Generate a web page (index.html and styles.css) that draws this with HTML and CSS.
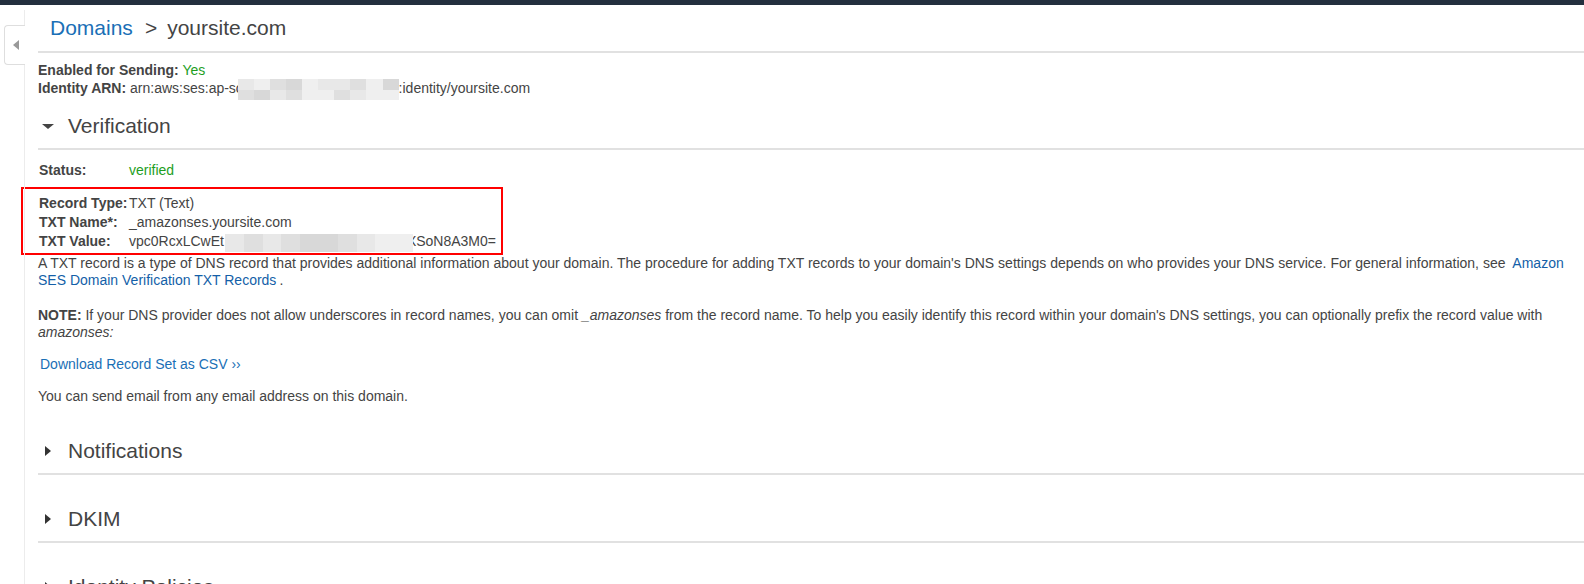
FILE: index.html
```html
<!DOCTYPE html>
<html lang="en">
<head>
<meta charset="utf-8">
<title>yoursite.com</title>
<link rel="stylesheet" href="styles.css">
</head>
<body>
<div class="topbar"></div>
<div class="layout">
  <aside class="sidebar">
    <div class="collapse-tab"><span class="arrow-left"></span></div>
  </aside>
  <main class="main">
    <div class="breadcrumb"><a class="crumb-link" href="#">Domains</a><span class="sep">&gt;</span><span class="crumb-current">yoursite.com</span></div>

    <div class="meta">
      <div><b>Enabled for Sending:</b> <span class="green">Yes</span></div>
      <div><b>Identity ARN:</b> arn:aws:ses:ap-so<span class="mosaic arn"><i class="s2"></i><i class="s4"></i><i class="s3"></i><i class="s1"></i><i class="s4"></i><i class="s2"></i><i class="s2"></i><i class="s3"></i><i class="s4"></i><i class="s1"></i><i class="s3"></i><i class="s1"></i><i class="s2"></i><i class="s3"></i><i class="s4"></i><i class="s4"></i><i class="s3"></i><i class="s2"></i><i class="s4"></i><i class="s4"></i></span>:identity/yoursite.com</div>
    </div>

    <section class="section">
      <div class="sec-head"><span class="icon-box"><span class="tri-down"></span></span><span class="sec-title">Verification</span></div>
      <div class="body">
        <div class="kv status-row">
          <span class="k">Status:</span><span class="v green">verified</span>
        </div>
        <div class="highlight">
          <div class="kv"><span class="k">Record Type:</span><span class="v">TXT (Text)</span></div>
          <div class="kv"><span class="k">TXT Name*:</span><span class="v">_amazonses.yoursite.com</span></div>
          <div class="kv"><span class="k">TXT Value:</span><span class="v">vpc0RcxLCwEt<span class="mosaic txt"><i class="s2"></i><i class="s3"></i><i class="s2"></i><i class="s3"></i><i class="s1"></i><i class="s1"></i><i class="s3"></i><i class="s2"></i><i class="s4"></i><i class="s4"></i></span>XSoN8A3M0=</span></div>
        </div>
        <p class="desc">A TXT record is a type of DNS record that provides additional information about your domain. The procedure for adding TXT records to your domain's DNS settings depends on who provides your DNS service. For general information, see <a class="inline-link" href="#">Amazon SES Domain Verification TXT Records</a>.</p>
        <p class="note"><b>NOTE:</b> If your DNS provider does not allow underscores in record names, you can omit <i>_amazonses</i> from the record name. To help you easily identify this record within your domain's DNS settings, you can optionally prefix the record value with <i>amazonses:</i></p>
        <p class="download"><a class="link" href="#">Download Record Set as CSV &rsaquo;&rsaquo;</a></p>
        <p class="send">You can send email from any email address on this domain.</p>
      </div>
    </section>

    <section class="section collapsed first-collapsed">
      <div class="sec-head"><span class="icon-box"><span class="tri-right"></span></span><span class="sec-title">Notifications</span></div>
    </section>
    <section class="section collapsed">
      <div class="sec-head"><span class="icon-box"><span class="tri-right"></span></span><span class="sec-title">DKIM</span></div>
    </section>
    <section class="section collapsed">
      <div class="sec-head"><span class="icon-box"><span class="tri-right"></span></span><span class="sec-title">Identity Policies</span></div>
    </section>
  </main>
</div>
</body>
</html>
```

FILE: styles.css
```css
html, body {
  margin: 0;
  padding: 0;
  overflow: hidden;
  background: #fff;
}
body {
  font-family: "Liberation Sans", Arial, sans-serif;
  font-size: 14px;
  color: #444;
  height: 584px;
}
.topbar {
  height: 5px;
  background: #232f3e;
}
.layout {
  display: flex;
  align-items: stretch;
  min-height: 579px;
}
.sidebar {
  position: relative;
  width: 24px;
  flex: 0 0 24px;
  margin-top: 5px;
  border-right: 1px solid #ececec;
}
.collapse-tab {
  position: absolute;
  left: 4px;
  top: 15px;
  width: 20px;
  height: 38px;
  border: 1px solid #dedede;
  border-right: none;
  border-radius: 4px 0 0 4px;
  background: #fff;
  display: flex;
  align-items: center;
  justify-content: center;
  z-index: 2;
}
.arrow-left {
  width: 0;
  height: 0;
  border-top: 5px solid transparent;
  border-bottom: 5px solid transparent;
  border-right: 6px solid #999;
  margin-left: 2px;
}
.main {
  flex: 1;
  min-width: 0;
  padding-left: 13px;
}
a {
  text-decoration: none;
}
.breadcrumb {
  font-size: 21px;
  line-height: 24px;
  padding: 11px 0 11px 12px;
  border-bottom: 2px solid #e1e1e1;
  color: #444;
}
.crumb-link {
  color: #1a6fb6;
}
.sep {
  margin: 0 10px 0 12px;
}
.meta {
  margin-top: 8px;
  line-height: 18px;
}
.green {
  color: #1e9e1e;
}
b {
  font-weight: bold;
}
.mosaic {
  display: inline-grid;
  vertical-align: top;
  position: relative;
  z-index: 1;
}
.mosaic i {
  display: block;
}
.mosaic.arn {
  grid-template-columns: repeat(10, 16.1px);
  grid-template-rows: 10.5px 10.5px;
  margin: 0 0 -3px -6px;
}
.mosaic.txt {
  grid-template-columns: repeat(10, 18.8px);
  grid-template-rows: 18px;
  margin: 2px -6px -3px 1px;
}
.s1 { background: #d8d8d8; }
.s2 { background: #e8e8e8; }
.s3 { background: #dfdfdf; }
.s4 { background: #efefef; }

.section {
  margin-top: 17px;
}
.sec-head {
  display: flex;
  align-items: center;
  padding-bottom: 10px;
  border-bottom: 2px solid #e1e1e1;
}
.icon-box {
  width: 20px;
  margin-right: 10px;
  display: flex;
  justify-content: center;
  align-items: center;
  height: 24px;
}
.tri-down {
  width: 0;
  height: 0;
  border-left: 6px solid transparent;
  border-right: 6px solid transparent;
  border-top: 5px solid #444;
}
.tri-right {
  width: 0;
  height: 0;
  border-top: 5px solid transparent;
  border-bottom: 5px solid transparent;
  border-left: 6px solid #333;
}
.sec-title {
  font-size: 21px;
  line-height: 24px;
  color: #444;
}
.body {
  padding-top: 11px;
}
.kv {
  display: grid;
  grid-template-columns: 90px auto;
  padding-left: 1px;
  line-height: 19px;
}
.status-row {
  line-height: 18px;
}
.k {
  font-weight: bold;
  white-space: nowrap;
}
.v {
  white-space: nowrap;
}
.highlight {
  margin: 8px 0 0 -17px;
  width: 482px;
  box-sizing: border-box;
  border: 2px solid #ff0000;
  padding: 5px 0 2px 15px;
}
.desc, .note, .download, .send {
  margin: 0;
  line-height: 17px;
}
.desc {
  margin-top: 0;
}
.inline-link {
  color: #145fa8;
  margin: 0 3px;
}
.note {
  margin-top: 18px;
}
.download {
  margin-top: 15px;
  padding-left: 2px;
}
.link {
  color: #1a6fb6;
}
.send {
  margin-top: 15px;
}
.collapsed {
  margin-top: 32px;
}
.first-collapsed {
  margin-top: 34px;
}
```
